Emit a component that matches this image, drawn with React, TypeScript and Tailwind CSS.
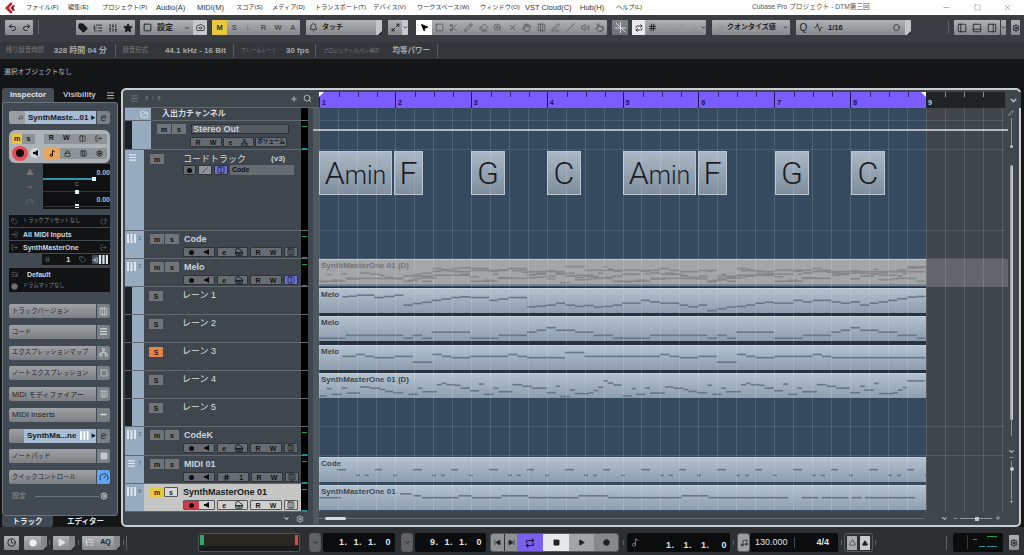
import type { ReactNode } from 'react'
import {
  Undo2, Redo2, Tag, ListTree, SlidersVertical, Star, Square, Camera, Triangle, Scissors, Pencil, Eraser, ZoomIn, X,
  Hand, Columns3, PenLine, Slash, Volume2, Pointer, MousePointer2, Hash, Repeat, ChevronDown, Maximize2, PanelLeft,
  PanelBottom, PanelRight, Settings, Minus, Search, Plus, FolderOpen, Menu, Circle, Play, SkipBack, SkipForward,
  Lock, Gauge, RotateCw, LogIn, LogOut, ListMusic, Piano, Network, Columns2, Clock, Music2, Music, Bell, Activity,
} from 'lucide-react'

const half = 915

// note lists are [x1, x2, y] in 3x units, taken from the part zooms
const lane1a = [[82,100,124],[100,125,122],[125,178,119],[178,208,126],[208,238,123],[238,265,119],[265,293,150],[293,322,145],[322,350,141],[350,380,135],[380,408,131],[408,437,126],[437,465,124],[465,522,126],[522,550,135],[550,580,131],[580,636,126],[636,665,155],[665,693,153],[693,722,150],[722,750,144],[750,780,150],[780,808,154],[808,836,151],[836,865,156],[865,893,154],[893,921,150]]
const lane1b = [[6,62,144],[62,90,135],[90,120,140],[120,178,144],[178,205,150],[205,235,155],[235,262,150],[262,292,167],[292,320,161],[320,350,156],[350,378,154],[378,406,150],[406,434,144],[434,462,141],[462,520,144],[520,548,135],[548,578,140],[578,634,135],[634,662,140],[662,690,144],[690,720,140],[720,748,150],[748,776,144],[776,804,140],[804,832,135],[832,862,130],[862,890,125],[890,916,123]]
const lane2a = [[12,92,250],[92,265,241],[265,293,250],[293,322,241],[322,350,250],[350,465,231],[465,550,250],[550,636,241],[636,665,231],[665,693,225],[693,722,217],[722,780,225],[780,836,231],[836,893,241],[893,921,250]]
const lane2b = [[0,90,250],[90,262,241],[262,292,250],[292,320,241],[320,348,250],[348,462,231],[462,548,250],[548,634,241],[634,662,231],[662,690,225],[690,720,217],[720,776,225],[776,832,231],[832,890,241],[890,916,250]]
const lane3a = [[82,122,300],[122,150,294],[150,178,300],[178,238,304],[238,293,300],[293,352,318],[352,380,294],[380,408,300],[408,465,304],[465,580,300],[580,608,294],[608,636,300],[636,750,304],[750,808,288],[808,921,300]]
const lane3b = [[0,120,300],[120,148,294],[148,178,300],[178,235,304],[235,290,300],[290,350,318],[350,378,294],[378,406,300],[406,464,304],[464,578,300],[578,606,294],[606,634,300],[634,916,304]]
const lane4a = [[15,35,420],[35,50,397],[50,80,415],[80,95,395],[95,135,411],[135,165,392],[165,195,396],[195,210,400],[210,235,406],[235,265,410],[280,308,415],[308,322,396],[322,365,407],[365,380,385],[380,395,381],[395,420,385],[420,437,387],[437,465,396],[465,492,404],[492,506,383],[506,535,415],[535,550,396],[550,592,407],[592,622,385],[622,650,390],[650,695,396],[695,722,410],[722,735,390],[735,765,422],[765,780,402],[780,822,413],[822,835,410],[835,850,403],[850,865,393],[865,878,373],[878,895,380],[895,920,386]]
const lane4b = [[8,35,420],[35,48,397],[48,76,415],[76,90,395],[90,135,411],[135,160,392],[160,190,396],[190,205,400],[205,230,406],[230,262,410],[262,276,387],[276,304,415],[304,318,396],[318,362,407],[362,378,385],[378,392,381],[392,418,385],[418,434,387],[434,462,396],[462,490,404],[490,504,383],[504,532,415],[532,546,396],[546,590,407],[590,620,385],[620,648,390],[648,690,396],[690,720,410],[720,734,390],[732,762,402],[762,776,381],[776,820,413],[820,834,410],[834,848,402],[848,860,394],[862,916,373]]

const join = (a: number[][], b: number[][]) => [...a, ...b.map(([x1, x2, y]) => [x1 + half, x2 + half, y])]
const lane1 = join(lane1a, lane1b)
const lane2 = join(lane2a, lane2b)
const lane3 = join(lane3a, lane3b)
const lane4 = join(lane4a, lane4b)
const shift = (n: number[][], d: number) => n.map(([a, b, y]) => [a, b, y - d])
// comp track shows all the lanes at once, but nothing sits behind its label
const comp = [...shift(lane1, 84), ...shift(lane2, 168), ...shift(lane3, 252), ...shift(lane4, 336)].filter(([a, , y]) => !(a < 285 && y < 55))

const codeNotes: number[][] = []
for (let b = 0; b < 8; b++) {
  const o = b * 228 + 12
  codeNotes.push([o + 54, o + 81, 36], [o + 168, o + 189, 36], [o + 111, o + 123, 54], [o + 138, o + 150, 54], [o + 222, o + 234, 54])
}
const synthNotes = [[12,78,36],[255,290,24],[295,318,30],[322,372,36],[372,430,36],[430,470,30],[470,560,36],[560,640,30],[640,700,36],[700,790,36],[790,880,30],[880,940,36],[940,1100,36],[1100,1180,30],[1180,1290,36],[1290,1420,36],[1460,1510,36],[1520,1600,36],[1610,1640,36],[1650,1800,36]]

function Part({ label, box, notes }: { label: string; box: string; notes: number[][] }) {
  return (
    <div className="relative h-[25px] w-[607px] overflow-hidden border-t border-[#c4cfd9] bg-linear-to-b from-[#b3c1ce] to-[#8d9dae]">
      <svg className="absolute inset-0 h-full w-full" viewBox={box} preserveAspectRatio="none">
        {notes.map(([a, b, y], i) => <rect key={i} x={a} y={y - 2} width={b - a} height={5} fill="#677788" />)}
      </svg>
      <span className="absolute left-[2px] top-[1px] text-[8px] font-bold leading-[10px] text-[#40464e]">{label}</span>
    </div>
  )
}

function Group({ className = '', children }: { className?: string; children?: ReactNode }) {
  return <div className={`flex h-[15px] shrink-0 items-center overflow-hidden rounded-[1px] bg-linear-to-b from-[#aeb2b5] to-[#86898d] text-[#1c1e20] ${className}`}>{children}</div>
}

function Slot({ className = '', children }: { className?: string; children?: ReactNode }) {
  return <div className={`flex h-full items-center justify-center ${className}`}>{children}</div>
}

const Sep = ({ className = '' }: { className?: string }) => <div className={`h-[14px] w-px shrink-0 bg-[#5b6166] ${className}`} />

// the small white corner on buttons that open a menu
const Corner = ({ className = '' }: { className?: string }) => (
  <div className={`flex h-full w-[6px] shrink-0 items-end justify-end bg-[#c2c5c7] ${className}`}>
    <svg width="4" height="4" viewBox="0 0 4 4"><path d="M4 0v4H0z" fill="#222" /></svg>
  </div>
)

function Keys({ className = 'fill-[#dfe6ee]' }: { className?: string }) {
  return (
    <svg width="9" height="9" viewBox="0 0 9 9" className={className}>
      <rect x="0" width="2" height="9" /><rect x="3.5" width="2" height="9" /><rect x="7" width="2" height="9" />
    </svg>
  )
}

function Mini({ className = '', children }: { className?: string; children?: ReactNode }) {
  return <div className={`flex h-[10px] w-[14px] shrink-0 items-center justify-center text-[7px] font-bold leading-none ${className}`}>{children}</div>
}
const dark = 'bg-[#6e7479] text-[#101214]'

function Ctl({ className = '', children, light }: { className?: string; children?: ReactNode; light?: boolean }) {
  return <div className={`flex h-[10px] shrink-0 items-center justify-around rounded-[1px] border text-[7px] font-bold leading-none ${light ? 'border-[#55595d] bg-[#d0d1cf] text-[#15171a]' : 'border-[#2e3338] bg-[#666c72] text-[#101214]'} ${className}`}>{children}</div>
}

const Dot = ({ className = 'bg-[#0d0e10]' }: { className?: string }) => <span className={`h-[5px] w-[5px] rounded-full ${className}`} />
const Spk = () => <svg width="5" height="6" viewBox="0 0 5 6"><path d="M0 2h1.5L5 0v6L1.5 4H0z" fill="#0d0e10" /></svg>

function Meter({ on }: { on?: boolean }) {
  return (
    <div className="relative w-[7px] shrink-0 bg-black">
      {on && <div className="absolute left-[1px] top-[5px] h-px w-[5px] bg-[#1e9a55]" />}
      {on && <div className="absolute bottom-0 left-[1px] h-px w-[5px] bg-[#1d8f99]" />}
    </div>
  )
}

function Track({ num, name, lanes, selected, icon, h = 'h-[28px]', midi }: { num: number; name: string; lanes?: boolean; selected?: boolean; icon?: ReactNode; h?: string; midi?: boolean }) {
  return (
    <div className={`flex ${h} border-b border-[#61686f]`}>
      <div className="flex w-[19px] shrink-0 items-start gap-[2px] bg-[#97abc0] pl-[2px] pt-[3px]">
        {icon ?? <Keys />}
        <span className="text-[6px] leading-[9px] text-[#5c6670]">{num}</span>
      </div>
      <div className={`flex w-[157px] shrink-0 flex-col pl-[6px] pt-[3px] ${selected ? 'bg-[#c6c7c5]' : 'bg-[#3f464d]'}`}>
        <div className="flex h-[10px] items-center">
          <Mini className={selected ? 'rounded-[1px] bg-[#e8c93e] text-[#222]' : dark}>m</Mini>
          <Mini className={selected ? 'rounded-[1px] border border-[#555] bg-[#d8d8d6] text-[#222]' : `ml-px ${dark}`}>s</Mini>
          <span className={`ml-[5px] text-[9px] font-bold leading-none ${selected ? 'text-[#17191b]' : 'text-[#ccd3da]'}`}>{name}</span>
        </div>
        <div className="ml-[33px] mt-[3px] flex items-center gap-[2px]">
          <Ctl light={selected} className={`w-[32px] ${selected ? 'bg-linear-to-r from-[#d03a4a] from-50% to-[#d0d1cf] to-50%' : ''}`}><Dot /><Spk /></Ctl>
          {midi
            ? <Ctl className="w-[32px]"><Hash size={7} strokeWidth={3} /><span className="text-[7px]">1</span></Ctl>
            : <Ctl light={selected} className="w-[31px]"><span>e</span><Piano size={8} strokeWidth={2.5} /></Ctl>}
          <Ctl light={selected} className="w-[32px]"><span>R</span><span>W</span></Ctl>
          {lanes
            ? <Ctl className="w-[14px] !bg-[#6d70d8]"><Columns2 size={8} strokeWidth={2} /></Ctl>
            : <Ctl light={selected} className="w-[14px]"><Columns3 size={8} strokeWidth={2} /></Ctl>}
        </div>
      </div>
      <Meter on />
    </div>
  )
}

function Lane({ name, solo }: { name: string; solo?: boolean }) {
  return (
    <div className="flex h-[28px] border-b border-[#61686f]">
      <div className="w-[7px] shrink-0 bg-[#1c2124]" />
      <div className="w-[12px] shrink-0 bg-[#97abc0]" />
      <div className="flex w-[157px] shrink-0 items-start bg-[#3f464d] pl-[5px] pt-[4px]">
        <Mini className={solo ? 'rounded-[1px] bg-[#e8824a] text-[#222]' : dark}>S</Mini>
        <span className="ml-[19px] text-[9px] leading-[9px] text-[#dbe0e6]">{name}</span>
      </div>
      <Meter />
    </div>
  )
}

function Chord({ x, w, children }: { x: string; w: string; children: ReactNode }) {
  return (
    <div className={`absolute top-[1px] flex h-[44px] items-center justify-center border border-[#b9c5d0] bg-linear-to-b from-[#aab8c5] to-[#7f8f9e] [font-family:Roboto,sans-serif] font-light text-[#1a1c1e] ${x} ${w}`}>
      {children}
    </div>
  )
}

const A = () => <span className="text-[32px] leading-none">A<span className="text-[25px]">min</span></span>
const L = ({ c }: { c: string }) => <span className="text-[32px] leading-none">{c}</span>

function SectionBtn({ label, children, active, size = 'text-[6.4px]' }: { label: string; children?: ReactNode; active?: boolean; size?: string }) {
  return (
    <div className="flex h-[14px] gap-px">
      <div className={`flex w-[87px] items-center overflow-hidden rounded-l-[2px] bg-linear-to-b from-[#9ea2a5] to-[#7c8084] pl-[3px] leading-none whitespace-nowrap text-[#23262a] ${size}`}>{label}</div>
      <div className={`flex w-[13px] items-center justify-center rounded-r-[2px] ${active ? 'bg-[#62a5ee]' : 'bg-[#7b8085]'} text-[#d5dadf]`}>{children}</div>
    </div>
  )
}

function InsRow({ left, label, right, bold }: { left?: ReactNode; label: string; right?: ReactNode; bold?: boolean }) {
  return (
    <div className="flex h-[12px] items-center bg-[#111315] pl-[2px] pr-[3px] leading-none">
      <span className="flex w-[11px] text-[#6a7076]">{left}</span>
      <span className={`ml-[1px] flex-1 whitespace-pre ${bold ? 'text-[7px] font-bold text-[#d3d7db]' : 'text-[5.2px] text-[#848a90]'}`}>{label}</span>
      <span className="text-[#6a7076]">{right}</span>
    </div>
  )
}

function Tick({ n }: { n: string }) {
  return (
    <div className="relative h-full w-[75.9px] shrink-0 border-l border-[#241a55]">
      <span className="absolute bottom-[1px] left-[2px] text-[7px] font-bold leading-[8px] text-[#15104a]">{n}</span>
      <div className="absolute left-[19px] top-0 h-[5px] w-px bg-[#2c2368]" />
      <div className="absolute left-[38px] top-0 h-[5px] w-px bg-[#2c2368]" />
      <div className="absolute left-[57px] top-0 h-[5px] w-px bg-[#2c2368]" />
    </div>
  )
}

const Black = ({ className = '', children }: { className?: string; children?: ReactNode }) => (
  <div className={`flex h-[19px] shrink-0 items-center rounded-[2px] bg-[#0b0c0d] ${className}`}>{children}</div>
)
const TBtn = ({ className = '', children }: { className?: string; children?: ReactNode }) => (
  <Group className={`!h-[14px] ${className}`}>{children}</Group>
)
const Pos = ({ v }: { v: string }) => <span className="whitespace-pre text-[9px] font-bold leading-none tracking-[0.5px] text-[#dfe2e5]">{v}</span>

const menus = [
  ['ファイル(F)', 'w-[42px] text-[6.2px]'], ['編集(E)', 'w-[34px] text-[6.2px]'], ['プロジェクト(P)', 'w-[54px] text-[6.2px]'], ['Audio(A)', 'w-[41px] text-[7.5px]'],
  ['MIDI(M)', 'w-[39px] text-[7.5px]'], ['スコア(S)', 'w-[36px] text-[6.2px]'], ['メディア(D)', 'w-[43px] text-[6.2px]'], ['トランスポート(T)', 'w-[58px] text-[6.2px]'],
  ['デバイス(V)', 'w-[44px] text-[6.2px]'], ['ワークスペース(W)', 'w-[63px] text-[6.2px]'], ['ウィンドウ(O)', 'w-[45px] text-[6.2px]'], ['VST Cloud(C)', 'w-[55px] text-[7.5px]'],
  ['Hub(H)', 'w-[36px] text-[7.5px]'], ['ヘルプ(L)', 'w-[32px] text-[6.2px]'],
]

export default function App() {
  return (
    <div className="flex h-[555px] w-[1024px] flex-col overflow-hidden bg-[#131517] [font-family:'Liberation_Sans','Noto_Sans_CJK_JP',sans-serif]">
      {/* title bar */}
      <div className="flex h-[15px] shrink-0 items-center bg-white text-[6.7px] leading-none text-[#333]">
        <svg className="ml-[5px] shrink-0" width="11" height="12" viewBox="0 0 11 12">
          <path d="M6 0 0 6l6 6 1.5-2L4 6l3.5-4z" fill="#c8202c" />
          <path d="M8 3 5.5 6 8 9l2-.5L8.5 6 10 3.5z" fill="#8c1a22" />
        </svg>
        <div className="ml-[10px] flex w-[622px] shrink-0 items-center whitespace-nowrap">
          {menus.map(([m, w]) => <span key={m} className={w}>{m}</span>)}
        </div>
        <span className="ml-[104px] whitespace-nowrap text-[#555]">Cubase Pro プロジェクト - DTM第三回</span>
        <div className="ml-auto flex w-[82px] items-center justify-between pr-[12px] text-[#333]">
          <Minus size={9} strokeWidth={1} />
          <Square size={7} strokeWidth={1} />
          <X size={9} strokeWidth={1} />
        </div>
      </div>

      {/* toolbar */}
      <div className="flex h-[27px] shrink-0 items-start bg-[#3a3e42] pl-[5px] pt-[5px]">
        <Group className="w-[28px] justify-around"><Undo2 size={9} strokeWidth={2.5} /><Redo2 size={9} strokeWidth={2.5} /></Group>
        <Sep className="ml-[5px]" />
        <Group className="ml-[37px] w-[59px] justify-around">
          <Tag size={10} fill="#1c1e20" /><ListTree size={10} /><SlidersVertical size={10} /><Star size={10} fill="#1c1e20" />
        </Group>
        <Group className="ml-[5px] w-[67px]">
          <Slot className="w-[14px]"><Square size={9} strokeWidth={2.5} /></Slot>
          <span className="ml-[3px] text-[8px] font-bold">設定</span>
          <ChevronDown className="ml-auto" size={6} strokeWidth={3} />
          <Slot className="ml-[3px] w-[14px] bg-[#c5c8ca]"><Camera size={9} strokeWidth={2} /></Slot>
        </Group>
        <Group className="ml-[5px] w-[88px] text-[7.5px] font-bold text-[#4f5356]">
          <Slot className="w-[15px] bg-[#e8c93e] text-[#3b3410]">M</Slot>
          <Slot className="flex-1">S</Slot><Slot className="flex-1 text-[#7d8184]">L</Slot><Slot className="flex-1">R</Slot><Slot className="flex-1">W</Slot><Slot className="flex-1">A</Slot>
        </Group>
        <Group className="ml-[6px] w-[76px]">
          <Slot className="w-[14px]"><Bell size={9} /></Slot>
          <span className="ml-[2px] text-[7px] font-bold">タッチ</span>
          <Corner className="ml-auto" />
        </Group>
        <Group className="ml-[6px] w-[20px]">
          <Slot className="w-[14px]"><Maximize2 size={9} strokeWidth={2.5} /></Slot>
          <Slot className="w-[6px] bg-[#c5c8ca]"><ChevronDown size={5} strokeWidth={4} /></Slot>
        </Group>
        <Group className="ml-[8px] w-[191px] text-[#4e5256]">
          <Slot className="w-[16px] bg-white text-black"><MousePointer2 size={9} fill="#000" /></Slot>
          <div className="flex flex-1 items-center justify-around">
            <Square size={9} /><Scissors size={9} /><Pencil size={9} /><Eraser size={9} /><ZoomIn size={9} /><X size={9} /><Hand size={9} /><Columns3 size={9} /><PenLine size={9} /><Slash size={9} /><Volume2 size={9} /><Pointer size={9} />
          </div>
        </Group>
        <Group className="ml-[5px] w-[16px] justify-center !from-[#80858a] !to-[#6d7276] text-[#d5d8da]">
          <svg width="11" height="11" viewBox="0 0 11 11" fill="none" stroke="currentColor"><path d="M0 6h11M5.5 0v11M1 1l9 9" /></svg>
        </Group>
        <Group className="ml-[4px] w-[74px]">
          <Slot className="w-[13px] bg-[#e9ebec]"><Repeat size={8} strokeWidth={2.5} /></Slot>
          <Slot className="w-[15px]"><Hash size={9} strokeWidth={2.5} /></Slot>
          <div className="flex flex-1 items-center justify-around text-[#93979a]"><Square size={7} /><RotateCw size={7} /><Activity size={7} /></div>
          <ChevronDown size={5} strokeWidth={4} />
        </Group>
        <Group className="ml-[6px] w-[78px] text-[7px] font-bold">
          <Slot className="ml-[4px] w-[9px] text-[#8f9396]"><Hash size={8} /></Slot>
          <span className="ml-[2px] whitespace-nowrap">クオンタイズ値</span>
          <ChevronDown className="ml-auto mr-[2px]" size={5} strokeWidth={4} />
        </Group>
        <Group className="ml-[6px] w-[115px] text-[7.5px] font-bold">
          <Slot className="w-[15px] text-[10px] font-normal">Q</Slot>
          <Slot className="w-[14px]"><Activity size={9} /></Slot>
          <span className="ml-[3px]">1/16</span>
          <Circle className="ml-auto mr-[5px]" size={7} strokeWidth={2.5} />
          <Corner />
        </Group>
        <Sep className="ml-[37px]" />
        <Group className="ml-[5px] w-[46px] justify-around"><PanelLeft size={10} /><PanelBottom size={10} /><PanelRight size={10} /></Group>
        <Group className="ml-px w-[5px] justify-center bg-[#c5c8ca]"><ChevronDown size={5} strokeWidth={4} /></Group>
        <Group className="ml-[5px] w-[9px] justify-center"><Settings size={8} strokeWidth={3} /></Group>
      </div>

      {/* info line */}
      <div className="flex h-[17px] shrink-0 items-center whitespace-nowrap bg-[#33373b] pl-[6px] text-[6.3px] leading-none text-[#73787d]">
        <span>残り録音時間</span>
        <span className="ml-[10px] text-[8px] font-bold text-[#a4a9ad]">328 時間 04 分</span>
        <Sep className="ml-[8px] !bg-[#565b60]" />
        <span className="ml-[7px]">録音形式</span>
        <span className="ml-[17px] text-[8px] font-bold text-[#a4a9ad]">44.1 kHz - 16 Bit</span>
        <Sep className="ml-[7px] !bg-[#565b60]" />
        <span className="ml-[7px] text-[5.2px]">フレームレート</span>
        <span className="ml-[9px] text-[8px] font-bold text-[#a4a9ad]">30 fps</span>
        <Sep className="ml-[6px] !bg-[#565b60]" />
        <span className="ml-[7px] text-[5.1px]">プロジェクトのパン補正</span>
        <span className="ml-[13px] text-[7.5px] font-bold text-[#a4a9ad]">均等パワー</span>
        <Sep className="ml-[7px] !bg-[#565b60]" />
      </div>

      {/* info band */}
      <div className="flex h-[26px] shrink-0 items-center bg-[#131517] pl-[4px] text-[6.8px] text-[#b4b8bb]">選択オブジェクトなし</div>

      {/* main */}
      <div className="flex h-[442px] shrink-0 pl-[2px] pt-[3px]">
        {/* inspector */}
        <div className="flex w-[116px] shrink-0 flex-col">
          <div className="flex h-[14px] shrink-0 items-end text-[8px] font-bold leading-none">
            <div className="flex h-[14px] w-[52px] items-center justify-center rounded-t-[3px] bg-[#454e56] text-[#e1e5e8]">Inspector</div>
            <span className="mb-[3px] ml-[9px] text-[#bcc2c7]">Visibility</span>
            <Menu className="mb-[2px] ml-auto mr-[3px] text-[#bcc2c7]" size={9} strokeWidth={2.5} />
          </div>
          <div className="flex h-[414px] shrink-0 flex-col rounded-b-[3px] rounded-tr-[3px] border border-[#6b747c] bg-[#414a52] pl-[6px] pr-[7px]">
            <div className="mt-[8px] flex h-[13px] shrink-0 items-stretch text-[8px] font-bold leading-none">
              <div className="flex w-[16px] items-center justify-end rounded-l-[2px] bg-[#9a9ea1] pr-[2px] text-[#333]"><Music size={5} /></div>
              <div className="flex w-[71px] items-center whitespace-nowrap bg-[#a8bdd4] pl-[3px] text-[#14181c]">SynthMaste...01<span className="ml-[2px] text-[5px]">▶</span></div>
              <div className="ml-px flex flex-1 items-center justify-center rounded-r-[2px] bg-[#7b8085] text-[10px] font-normal italic text-[#2a2d30]">e</div>
            </div>
            <div className="mt-[6px] h-[33px] shrink-0 rounded-[6px] bg-[#adb2b6] px-[3px] pt-[3px]">
              <div className="flex h-[11px] items-center">
                <Mini className="!w-[10px] rounded-[1px] bg-[#e4c545] text-[#222]">m</Mini>
                <Mini className="!w-[13px] bg-[#8e9398] text-[#111]">s</Mini>
                <div className="ml-[9px] flex h-[10px] flex-1 items-center justify-around bg-[#8e9398] text-[7px] font-bold text-[#111]">
                  <span>R</span><span>W</span><Columns2 size={7} /><LogOut size={7} />
                </div>
              </div>
              <div className="mt-[2px] flex h-[14px] items-center">
                <div className="flex h-[15px] w-[16px] shrink-0 items-center justify-center rounded-full bg-[#e94a5a]"><div className="h-[8px] w-[8px] rounded-full bg-[#111]" /></div>
                <div className="ml-[2px] flex h-[10px] w-[10px] items-center justify-center rounded-full bg-[#d1d4d6]"><Spk /></div>
                <div className="ml-[4px] flex h-[11px] flex-1 items-center rounded-[2px] bg-[#8e9398]">
                  <Slot className="w-[16px] rounded-l-[2px] bg-[#e8a75b]"><Music2 size={7} strokeWidth={3} /></Slot>
                  <div className="flex flex-1 items-center justify-around text-[#111]"><Lock size={7} /><Columns3 size={7} /><Settings size={7} strokeWidth={3} /></div>
                </div>
              </div>
            </div>
            <div className="mt-px flex h-[45px] shrink-0">
              <div className="flex w-[34px] shrink-0 flex-col items-center justify-around pl-[8px] text-[#6f757b]">
                <Triangle size={8} fill="#6f757b" strokeWidth={0} />
                <ChevronDown size={8} strokeWidth={3} />
                <Gauge size={8} />
              </div>
              <div className="relative flex-1 bg-[#0e1011] text-[7px] font-bold leading-none text-[#b9bdc1]">
                <span className="absolute right-0 top-[5px]">0.00</span>
                <div className="absolute left-0 top-[14px] h-[2px] w-[51px] bg-[#2e96a8]" />
                <div className="absolute left-[49px] top-[13px] h-[4px] w-[4px] bg-[#e2f0f5]" />
                <div className="absolute left-0 right-0 top-[27px] h-px bg-[#33373a]" />
                <span className="absolute left-[32px] top-[18px] text-[5px] font-normal text-[#8a9096]">C</span>
                <div className="absolute left-[32px] top-[26px] h-[4px] w-[4px] bg-[#e2f0f5]" />
                <span className="absolute right-0 top-[32px]">0.00</span>
                <div className="absolute left-[32px] top-[40px] h-[4px] w-[4px] bg-[#e2f0f5]" />
                <div className="absolute bottom-[2px] left-0 right-0 h-px bg-[#33373a]" />
              </div>
            </div>
            <div className="mt-[6px] flex shrink-0 flex-col gap-px">
              <InsRow left={<Tag size={7} />} label="トラックプリセットなし" right={<RotateCw size={7} />} />
              <InsRow left={<LogIn size={7} />} label="All MIDI Inputs" bold />
              <InsRow left={<LogOut size={7} />} label="SynthMasterOne" bold right={<LogOut size={7} />} />
              <div className="ml-[33px] flex h-[11px] items-center bg-[#111315] pr-[2px] text-[8px] font-bold text-[#cfd3d6]">
                <Hash className="ml-[2px] text-[#5c6166]" size={7} />
                <span className="ml-[15px]">1</span>
                <Tag className="ml-[9px] text-[#7d8389]" size={7} />
                <span className="ml-auto flex h-[9px] w-[16px] items-center justify-end gap-px bg-[#3b4a54] text-[#d8e2e8]"><LogIn size={6} strokeWidth={3} /><Keys /></span>
              </div>
            </div>
            <div className="mt-[3px] flex shrink-0 flex-col">
              <InsRow left={<ListMusic size={7} />} label="  Default" bold />
              <InsRow left={<Circle size={7} fill="#6a7076" />} label="ドラムマップなし" />
            </div>
            <div className="mt-[12px] flex shrink-0 flex-col gap-[6.75px]">
              <SectionBtn label="トラックバージョン"><Columns3 size={9} /></SectionBtn>
              <SectionBtn label="コード"><Menu size={9} strokeWidth={3} /></SectionBtn>
              <SectionBtn label="エクスプレッションマップ"><Network size={9} /></SectionBtn>
              <SectionBtn label="ノートエクスプレッション"><Square size={8} /></SectionBtn>
              <SectionBtn label="MIDI モディファイアー" size="text-[7px]"><Columns3 size={8} /></SectionBtn>
              <SectionBtn label="MIDI Inserts" size="text-[8px]"><Minus size={9} strokeWidth={4} /></SectionBtn>
              <div className="flex h-[14px] gap-px">
                <div className="w-[15px] rounded-l-[2px] bg-linear-to-b from-[#9ea2a5] to-[#7c8084]" />
                <div className="-ml-px flex w-[72px] items-center whitespace-nowrap bg-[#a8bdd4] pl-[3px] text-[8px] font-bold text-[#14181c]">SynthMa...ne<Keys className="ml-[4px] fill-white" /><span className="ml-[2px] text-[5px]">▶</span></div>
                <div className="flex w-[13px] items-center justify-center rounded-r-[2px] bg-[#7b8085] text-[10px] italic text-[#2a2d30]">e</div>
              </div>
              <SectionBtn label="ノートパッド"><Square size={8} fill="#c3c8cc" /></SectionBtn>
              <SectionBtn label="クイックコントロール" active><Gauge size={10} color="#143250" /></SectionBtn>
            </div>
            <div className="mt-[5px] flex h-[14px] shrink-0 items-center text-[7px] text-[#8b9197]">
              <span className="ml-[3px]">設定</span>
              <div className="ml-[9px] h-px flex-1 bg-[#6d747a]" />
              <Settings className="ml-[1px] mr-[2px] text-[#cdd2d6]" size={8} strokeWidth={3} />
            </div>
          </div>
          <div className="flex h-[11px] shrink-0 text-[7.5px] font-bold leading-none text-[#e4e7ea]">
            <div className="flex w-[51px] items-center justify-center rounded-b-[3px] bg-[#414a52]">トラック</div>
            <div className="flex flex-1 items-center justify-center">エディター</div>
          </div>
        </div>

        {/* project window */}
        <div className="ml-[3px] flex h-[439px] w-[900px] shrink-0 rounded-[5px] border-2 border-[#c8cdd1] bg-[#3f464c]">
          {/* track list */}
          <div className="ml-[2px] flex w-[194px] shrink-0 flex-col">
            <div className="flex h-[18px] shrink-0 items-center border-b border-[#61686f] text-[6px] tracking-[1px] text-[#7c8389]">
              <Menu className="ml-[5px]" size={9} />
              <span className="ml-[6px]">8 / 8</span>
              <Plus className="ml-[128px] text-[#b6bcc1]" size={8} strokeWidth={3} />
              <Search className="ml-[5px] text-[#b6bcc1]" size={9} strokeWidth={2.5} />
            </div>
            <div className="flex min-h-0 flex-1">
              <div className="w-[183px] shrink-0">
                {/* folder */}
                <div className="flex h-[13px] border-b border-[#61686f]">
                  <div className="flex w-[26px] shrink-0 items-center justify-end bg-[#97abc0] pr-[2px]"><FolderOpen size={9} color="#e4e9ee" /></div>
                  <span className="flex w-[150px] shrink-0 items-center bg-[#3f464d] pl-[11px] text-[8px] font-bold text-[#d8dde2]">入出力チャンネル</span>
                  <Meter />
                </div>
                <div className="flex h-[29px] border-b border-[#61686f]">
                  <div className="w-[7px] shrink-0 bg-[#1c2124]" />
                  <div className="w-[19px] shrink-0 bg-[#97abc0]" />
                  <div className="w-[150px] shrink-0 bg-[#3f464d] pl-[6px] pt-[3px]">
                    <div className="flex items-center">
                      <Mini className={dark}>m</Mini>
                      <Mini className={`ml-px ${dark}`}>s</Mini>
                      <div className="ml-[5px] flex h-[10px] w-[98px] items-center border border-[#2e3338] bg-[#555b61] pl-[1px] text-[9px] font-bold leading-none text-[#cbd1d6]">Stereo Out</div>
                    </div>
                    <div className="ml-[33px] mt-[3px] flex gap-[1px]">
                      <Ctl className="w-[32px]"><span>R</span><span>W</span></Ctl>
                      <Ctl className="w-[31px]"><span>e</span><Network size={7} /></Ctl>
                      <Ctl className="w-[32px]"><span className="whitespace-nowrap text-[5.5px]">ボリューム</span></Ctl>
                    </div>
                  </div>
                  <Meter on />
                </div>
                {/* chord track */}
                <div className="flex h-[81px] border-b border-[#61686f]">
                  <div className="w-[19px] shrink-0 bg-[#97abc0] pl-[3px] pt-[3px]"><Menu size={9} color="#e4e9ee" strokeWidth={3} /></div>
                  <div className="w-[157px] shrink-0 bg-[#3f464d] pl-[6px] pt-[4px]">
                    <div className="flex items-start">
                      <Mini className={dark}>m</Mini>
                      <span className="ml-[19px] text-[9px] leading-[10px] text-[#d3d8dd]">コードトラック</span>
                      <span className="ml-[25px] text-[8px] font-bold leading-[10px] text-[#cbd1d6]">(v3)</span>
                    </div>
                    <div className="ml-[33px] mt-px flex gap-[2px]">
                      <Ctl className="w-[13px]"><Dot /></Ctl>
                      <Ctl className="w-[14px] !bg-[#8f9499]"><Slash size={6} /></Ctl>
                      <Ctl className="w-[14px] !bg-[#6d70d8]"><Columns2 size={8} /></Ctl>
                      <div className="flex h-[10px] w-[64px] items-center rounded-[1px] bg-[#666c72] pl-[2px] text-[7px] font-bold text-[#111]">Code</div>
                    </div>
                  </div>
                  <Meter />
                </div>
                <Track num={1} name="Code" />
                <Track num={2} name="Melo" lanes />
                <Lane name="レーン 1" />
                <Lane name="レーン 2" />
                <Lane name="レーン 3" solo />
                <Lane name="レーン 4" />
                <Lane name="レーン 5" />
                <Track num={3} name="CodeK" h="h-[29px]" />
                <Track num={7} name="MIDI 01" midi icon={<Menu size={9} color="#e4e9ee" strokeWidth={3} />} />
                <Track num={8} name="SynthMasterOne 01" selected />
                <div className="flex h-[13px] items-center justify-end pr-[4px] text-[#aeb4b9]">
                  <ChevronDown size={7} strokeWidth={4} />
                  <Settings className="ml-[6px]" size={8} strokeWidth={3} />
                </div>
              </div>
              <div className="ml-[5px] w-[6px] shrink-0 bg-[#50585f]" />
            </div>
          </div>

          {/* arrange */}
          <div className="flex w-[704px] shrink-0 flex-col">
            <div className="flex h-[18px] shrink-0 items-end">
              <div className="relative flex h-[16px] w-[607px] shrink-0 overflow-hidden bg-[#7b5cff]">
                {['1', '2', '3', '4', '5', '6', '7', '8'].map((n) => <Tick key={n} n={n} />)}
                <svg className="absolute left-0 top-0" width="5" height="5" viewBox="0 0 5 5"><path d="M0 0h5L0 5z" fill="#fff" /></svg>
                <svg className="absolute right-0 top-0" width="5" height="5" viewBox="0 0 5 5"><path d="M0 0h5v5z" fill="#fff" /></svg>
              </div>
              <div className="relative h-[16px] w-[79px] shrink-0 bg-[#202427]">
                <span className="absolute bottom-[1px] left-[2px] text-[7px] font-bold leading-[8px] text-[#c9cdd0]">9</span>
                <div className="absolute left-[19px] top-0 h-[5px] w-px bg-[#8b9095]" />
                <div className="absolute left-[38px] top-0 h-[5px] w-px bg-[#8b9095]" />
                <div className="absolute left-[57px] top-0 h-[5px] w-px bg-[#8b9095]" />
              </div>
              <div className="flex h-[16px] w-[16px] items-center justify-center bg-[#3f464c] text-[#aeb4b9]"><ChevronDown size={9} strokeWidth={4} /></div>
            </div>
            <div className="flex min-h-0 flex-1">
              <div className="relative w-[686px] shrink-0 bg-[#3f4549]">
                <div className="absolute inset-y-0 left-0 w-[607px] bg-[#35495f]" />
                <div className="relative">
                  <div className="h-[13px] border-b border-white/10" />
                  <div className="h-[29px] border-b border-white/10 pt-[8px]"><div className="-ml-[6px] h-[2px] w-[695px] bg-[#b4b8bb]" /></div>
                  <div className="relative h-[81px] border-b border-white/10">
                    <Chord x="left-0" w="w-[73px]"><A /></Chord>
                    <Chord x="left-[75px]" w="w-[29px]"><L c="F" /></Chord>
                    <Chord x="left-[152px]" w="w-[34px]"><L c="G" /></Chord>
                    <Chord x="left-[228px]" w="w-[34px]"><L c="C" /></Chord>
                    <Chord x="left-[304px]" w="w-[73px]"><A /></Chord>
                    <Chord x="left-[379px]" w="w-[29px]"><L c="F" /></Chord>
                    <Chord x="left-[456px]" w="w-[34px]"><L c="G" /></Chord>
                    <Chord x="left-[532px]" w="w-[34px]"><L c="C" /></Chord>
                  </div>
                  <div className="h-[28px] border-b border-white/10" />
                  <div className="flex h-[28px]">
                    <div className="h-[27px] w-[607px] shrink-0 border-t border-[#c5c8ca] border-b-2 border-b-[#7d8184] bg-[#a3a6a9]">
                      <div className="relative h-full">
                        <svg className="absolute inset-0 h-full w-full" viewBox="12 16 1821 75" preserveAspectRatio="none">
                          {comp.map(([a, b, y], i) => <rect key={i} x={a} y={y - 2} width={b - a} height={5} fill="#85888b" />)}
                        </svg>
                        <span className="absolute left-[2px] top-[1px] text-[8px] font-bold leading-[10px] text-[#707478]">SynthMasterOne 01 (D)</span>
                      </div>
                    </div>
                    <div className="h-[28px] w-[82px] shrink-0 bg-[#626569]" />
                  </div>
                  <div className="h-[28px] w-[607px] bg-[#26333f] pt-px"><Part label="Melo" box="12 100 1821 75" notes={lane1} /></div>
                  <div className="h-[28px] w-[607px] bg-[#26333f] pt-px"><Part label="Melo" box="12 184 1821 75" notes={lane2} /></div>
                  <div className="h-[28px] w-[607px] bg-[#26333f] pt-[2px]"><Part label="Melo" box="12 268 1821 75" notes={lane3} /></div>
                  <div className="h-[28px] w-[607px] border-t-2 border-[#26333f]"><Part label="SynthMasterOne 01 (D)" box="12 352 1821 75" notes={lane4} /></div>
                  <div className="h-[28px] border-b border-white/10" />
                  <div className="h-[29px] border-b border-white/10" />
                  <div className="h-[28px] pt-px"><Part label="Code" box="12 0 1821 75" notes={codeNotes} /></div>
                  <div className="h-[28px] pt-px"><Part label="SynthMasterOne 01" box="12 0 1821 75" notes={synthNotes} /></div>
                </div>
                <div className="pointer-events-none absolute inset-0 bg-[repeating-linear-gradient(90deg,rgba(255,255,255,.13)_0,rgba(255,255,255,.13)_1px,transparent_1px,transparent_18.97px)]" />
              </div>
              {/* vertical strip */}
              <div className="flex w-[16px] shrink-0 flex-col items-center pr-[4px] text-[#b7bcc0]">
                <Pencil className="mt-[2px]" size={6} />
                <div className="relative mt-[2px] h-[30px] w-px bg-[#8f959a]"><div className="absolute bottom-0 left-[-1px] h-[3px] w-[3px] rounded-full bg-[#c2c6ca]" /></div>
                <div className="mt-[17px] h-[255px] w-[3px] rounded-[2px] bg-linear-to-r from-[#8f9499] to-[#d4d7da]" />
                <div className="h-[16px] w-px bg-[#8f959a]" />
                <ChevronDown className="mt-[12px]" size={7} strokeWidth={4} />
                <Minus size={5} strokeWidth={3} />
                <div className="relative mt-px h-[38px] w-px bg-[#8f959a]"><div className="absolute left-[-1px] top-[6px] h-[4px] w-[4px] rounded-full bg-[#c2c6ca]" /></div>
                <Plus size={5} strokeWidth={3} />
              </div>
            </div>
            <div className="flex h-[13px] shrink-0 items-center pb-[1px] text-[#aeb4b9]">
              <div className="relative ml-[-2px] h-px w-[608px] bg-[#656c72]"><div className="absolute left-[8px] top-[-1px] h-[3px] w-[21px] rounded-[2px] bg-[#d8dbdd]" /></div>
              <ChevronDown className="ml-[16px]" size={7} strokeWidth={4} />
              <Minus className="ml-[5px]" size={5} strokeWidth={3} />
              <div className="relative ml-[2px] h-px w-[32px] bg-[#8f959a]"><div className="absolute left-[15px] top-[-1px] h-[4px] w-[4px] bg-[#c2c6ca]" /></div>
              <Plus className="ml-[3px]" size={6} strokeWidth={3} />
            </div>
          </div>
        </div>
      </div>

      {/* transport */}
      <div className="flex h-[28px] shrink-0 items-center bg-[#2d3033] pl-[4px] pt-[3px]">
        <TBtn className="w-[15px] justify-center"><Clock size={9} strokeWidth={2.5} /></TBtn>
        <TBtn className="ml-[5px] w-[23px]"><Slot className="flex-1"><Circle size={8} fill="#eee" color="#eee" /></Slot><Corner className="!bg-[#85898d]" /></TBtn>
        <Sep className="ml-[2px] !h-[5px]" />
        <TBtn className="ml-[3px] w-[22px]"><Slot className="flex-1"><Play size={9} fill="#dfe2e4" color="#dfe2e4" /></Slot><Corner className="!bg-[#85898d]" /></TBtn>
        <Sep className="ml-[3px] !h-[5px]" />
        <TBtn className="ml-[3px] w-[38px] text-[7px] font-bold"><Slot className="w-[15px]"><ListTree size={9} color="#eee" /></Slot><Slot className="flex-1">AQ</Slot><Corner className="!bg-[#85898d]" /></TBtn>
        <Sep className="ml-[3px] !h-[5px]" />
        <Sep className="ml-[2px] !h-[14px]" />
        <div className="ml-[71px] flex h-[19px] w-[102px] shrink-0 flex-col rounded-[2px] border border-[#4d5256] bg-[#191b1d]">
          <div className="flex h-[12px] items-stretch justify-between bg-[#2a2622] px-[1px] py-px"><div className="w-[4px] bg-[#2fa568]" /><div className="w-[3px] bg-[#e0474c]" /></div>
        </div>
        <div className="ml-[9px] flex h-[19px] w-[12px] shrink-0 items-center justify-center rounded-[3px] border border-[#565b60] bg-[#5e6367] text-[#17191b]"><ChevronDown size={7} strokeWidth={3} /></div>
        <Black className="ml-[2px] w-[72px] justify-end pr-[4px]"><Pos v="1.  1.  1.   0" /></Black>
        <div className="ml-[6px] flex h-[19px] w-[12px] shrink-0 items-center justify-center rounded-[3px] border border-[#565b60] bg-[#5e6367] text-[#17191b]"><ChevronDown size={7} strokeWidth={3} /></div>
        <Black className="ml-[2px] w-[71px] justify-end pr-[4px]"><Pos v="9.  1.  1.   0" /></Black>
        <div className="ml-[4px] flex h-[19px] w-[129px] shrink-0 items-stretch overflow-hidden rounded-[3px] border border-[#565b60] text-[#222]">
          <Slot className="w-[13px] bg-[#8d9195]"><SkipBack size={7} fill="#222" /></Slot>
          <Slot className="ml-px w-[12px] bg-[#8d9195]"><SkipForward size={7} fill="#222" /></Slot>
          <Slot className="w-[26px] bg-[#7b60ee] text-[#16123c]"><Repeat size={10} strokeWidth={2.5} /></Slot>
          <Slot className="w-[26px] bg-[#e6e8ea]"><Square size={7} fill="#222" /></Slot>
          <Slot className="w-[25px] bg-[#a1a5a8]"><Play size={7} fill="#222" /></Slot>
          <Slot className="flex-1 bg-[#85898d]"><Circle size={7} fill="#222" /></Slot>
        </div>
        <Sep className="ml-[4px] !h-[5px]" />
        <Black className="ml-[3px] w-[103px] pr-[3px]">
          <Music2 className="ml-[4px] text-[#8b9095]" size={9} />
          <span className="ml-auto"><Pos v="1.   1.   1.    0" /></span>
        </Black>
        <Sep className="ml-[3px] !h-[5px]" />
        <div className="ml-[3px] flex h-[19px] w-[13px] shrink-0 items-center justify-center rounded-[3px] border border-[#565b60] bg-[#9a9ea1] text-[#17191b]"><Music size={8} /></div>
        <Black className="w-[88px] text-[9px] text-[#dfe2e5]">
          <span className="ml-[5px] w-[39px] leading-none">130.000</span>
          <div className="h-[11px] w-px bg-[#4b4f53]" />
          <span className="ml-auto mr-[9px] font-bold leading-none">4/4</span>
        </Black>
        <Sep className="ml-[3px] !h-[5px]" />
        <div className="ml-[2px] flex h-[19px] w-[29px] shrink-0 items-center justify-between rounded-[3px] border border-[#565b60] px-[2px]">
          <div className="flex h-[14px] w-[10px] items-center justify-center bg-[#a7abae] text-[#1c1e20]"><Triangle size={7} /></div>
          <div className="flex h-[14px] w-[10px] items-center justify-center bg-[#c8cbcd] text-[#1c1e20]"><Triangle size={6} fill="#1c1e20" /></div>
        </div>
        <Sep className="ml-[2px] !h-[5px]" />
        <Sep className="ml-[70px] !h-[14px]" />
        <Black className="relative ml-[6px] w-[50px]">
          <div className="absolute left-[14px] top-[2px] h-[15px] w-px bg-[#33373a]" />
          <div className="absolute left-[20px] top-[6px] h-px w-[4px] bg-[#1e9a55]" />
          <div className="absolute left-[34px] top-[3px] h-px w-[10px] bg-[#1e9a55]" />
          <div className="absolute left-[26px] top-[13px] h-px w-[6px] bg-[#1d8f99]" />
          <div className="absolute left-[34px] top-[13px] h-px w-[10px] bg-[#1d8f99]" />
        </Black>
        <TBtn className="ml-[6px] !h-[15px] w-[10px] justify-center"><Settings size={8} strokeWidth={3} /></TBtn>
      </div>
    </div>
  )
}
